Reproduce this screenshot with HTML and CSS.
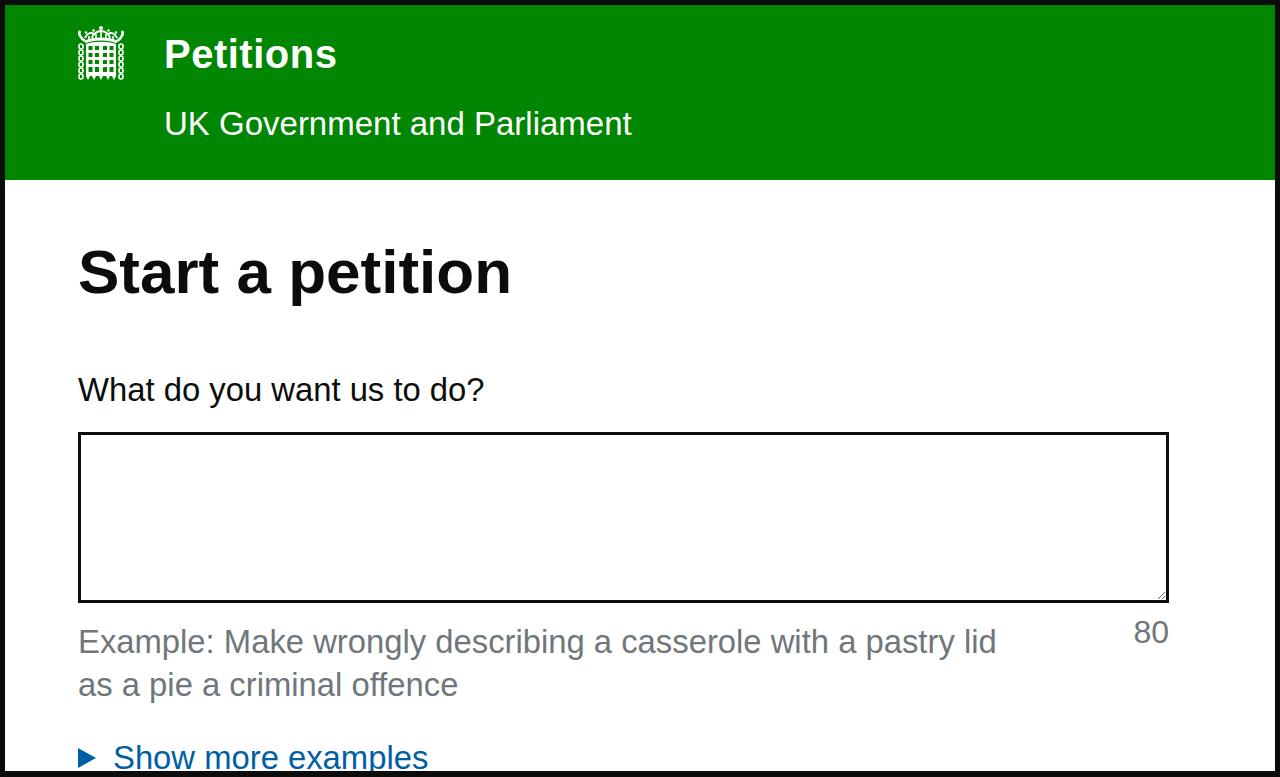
FILE: index.html
```html
<!DOCTYPE html>
<html lang="en">
<head>
  <meta charset="UTF-8" />
  <meta name="viewport" content="width=device-width, initial-scale=1.0"/>
  <title>Start a petition</title>
  <link rel="stylesheet" href="styles.css">
</head>
<body>

  <div class="frame">
    <header class="site-header">
      <svg class="crest" viewBox="0 0 46 56" aria-hidden="true">
        <!-- crown -->
        <g fill="none" stroke="#fff">
          <path stroke-width="2.6" d="M1 7c1 4 3 6 6 8M45 7c-1 4-3 6-6 8"/>
          <path stroke-width="3" d="M7 16c9-4 23-4 32 0"/>
          <path stroke-width="2" d="M7 12c2-5 6-6 9-4M39 12c-2-5-6-6-9-4M14 12c1-4 5-7 9-7s8 3 9 7"/>
          <path stroke-width="1.6" d="M18 13V8M23 12V4M28 13V8M11 14v-4M35 14v-4"/>
        </g>
        <g fill="#fff">
          <circle cx="1.5" cy="6" r="1.5"/>
          <circle cx="44.5" cy="6" r="1.5"/>
          <circle cx="8" cy="6.5" r="1.3"/>
          <circle cx="38" cy="6.5" r="1.3"/>
          <circle cx="15.5" cy="4.5" r="1.3"/>
          <circle cx="30.5" cy="4.5" r="1.3"/>
          <circle cx="23" cy="2" r="2"/>
          <!-- portcullis -->
          <path d="M8 18c9-3 21-3 30 0v32l-2 4-2-4h-2l-2 4-2-4h-3l-2 4-2-4h-3l-2 4-2-4h-2l-2 4-2-4z"/>
        </g>
        <g fill="#008600">
          <rect x="10.5" y="20" width="4" height="4"/>
          <rect x="17" y="20" width="4" height="4"/>
          <rect x="25" y="20" width="4" height="4"/>
          <rect x="31.5" y="20" width="4" height="4"/>
          <rect x="10.5" y="27" width="4" height="4"/>
          <rect x="17" y="27" width="4" height="4"/>
          <rect x="25" y="27" width="4" height="4"/>
          <rect x="31.5" y="27" width="4" height="4"/>
          <rect x="10.5" y="34" width="4" height="4"/>
          <rect x="17" y="34" width="4" height="4"/>
          <rect x="25" y="34" width="4" height="4"/>
          <rect x="31.5" y="34" width="4" height="4"/>
          <rect x="10.5" y="41" width="4" height="5"/>
          <rect x="17" y="41" width="4" height="5"/>
          <rect x="25" y="41" width="4" height="5"/>
          <rect x="31.5" y="41" width="4" height="5"/>
        </g>
        <!-- chains -->
        <g fill="none" stroke="#fff" stroke-width="1.6">
          <rect x="1" y="18" width="4" height="5" rx="2"/>
          <rect x="1" y="24" width="4" height="5" rx="2"/>
          <rect x="1" y="30" width="4" height="5" rx="2"/>
          <rect x="1" y="36" width="4" height="5" rx="2"/>
          <rect x="1" y="42" width="4" height="5" rx="2"/>
          <rect x="1" y="48" width="4" height="5" rx="2"/>
          <rect x="41" y="18" width="4" height="5" rx="2"/>
          <rect x="41" y="24" width="4" height="5" rx="2"/>
          <rect x="41" y="30" width="4" height="5" rx="2"/>
          <rect x="41" y="36" width="4" height="5" rx="2"/>
          <rect x="41" y="42" width="4" height="5" rx="2"/>
          <rect x="41" y="48" width="4" height="5" rx="2"/>
        </g>
      </svg>
      <div class="site-titles">
        <div class="site-name">Petitions</div>
        <div class="site-sub">UK Government and Parliament</div>
      </div>
    </header>

    <main class="content">
      <h1>Start a petition</h1>

      <label class="field-label" for="action">What do you want us to do?</label>
      <textarea class="field-input" id="action" rows="4"></textarea>

      <div class="field-meta">
        <p class="hint">Example: Make wrongly describing a casserole with a pastry lid as a pie a criminal offence</p>
        <span class="counter">80</span>
      </div>

      <a class="more-link" href="#">Show more examples</a>
    </main>
  </div>

</body>
</html>
```

FILE: styles.css
```css
* {
  box-sizing: border-box;
  font-family: 'Liberation Sans', Arial, sans-serif;
}

html, body {
  margin: 0;
  height: 100%;
  overflow: hidden;
}

.frame {
  height: 777px;
  background: #fff;
  border: 5px solid #0b0c0c;
  border-bottom-width: 6px;
  overflow: hidden;
}

.site-header {
  display: flex;
  gap: 40px;
  height: 175px;
  padding: 21px 0 0 73px;
  background: #008600;
  color: #fff;
}

.crest {
  width: 46px;
  height: 56px;
  flex: none;
}

.site-name {
  font-size: 40px;
  font-weight: bold;
  line-height: 56px;
  letter-spacing: 0.5px;
}

.site-sub {
  margin-top: 22px;
  font-size: 33px;
  line-height: 40px;
}

.content {
  padding: 0 106px 0 73px;
}

h1 {
  margin: 55px 0 0;
  font-size: 62px;
  line-height: 74px;
  color: #0b0c0c;
}

.field-label {
  display: block;
  margin-top: 61px;
  font-size: 32.8px;
  line-height: 40px;
  color: #0b0c0c;
}

.field-input {
  display: block;
  width: 100%;
  height: 171px;
  margin-top: 22px;
  padding: 10px;
  border: 3px solid #0b0c0c;
  border-radius: 0;
  background: #fff;
  outline: none;
}

.field-meta {
  display: flex;
  justify-content: space-between;
  align-items: flex-start;
}

.hint {
  width: 930px;
  margin: 17px 0 0;
  font-size: 32.8px;
  line-height: 43px;
  color: #6f777b;
}

.counter {
  margin-top: 9px;
  font-size: 32px;
  line-height: 40px;
  color: #6f777b;
}

.more-link {
  display: block;
  position: relative;
  margin-top: 32px;
  padding-left: 35px;
  font-size: 32.8px;
  line-height: 40px;
  color: #005ea5;
  text-decoration: underline;
  text-underline-offset: 6px;
}

.more-link::before {
  content: "";
  position: absolute;
  left: 0;
  top: 10px;
  border-style: solid;
  border-width: 10px 0 10px 18px;
  border-color: transparent transparent transparent #005ea5;
}
```
